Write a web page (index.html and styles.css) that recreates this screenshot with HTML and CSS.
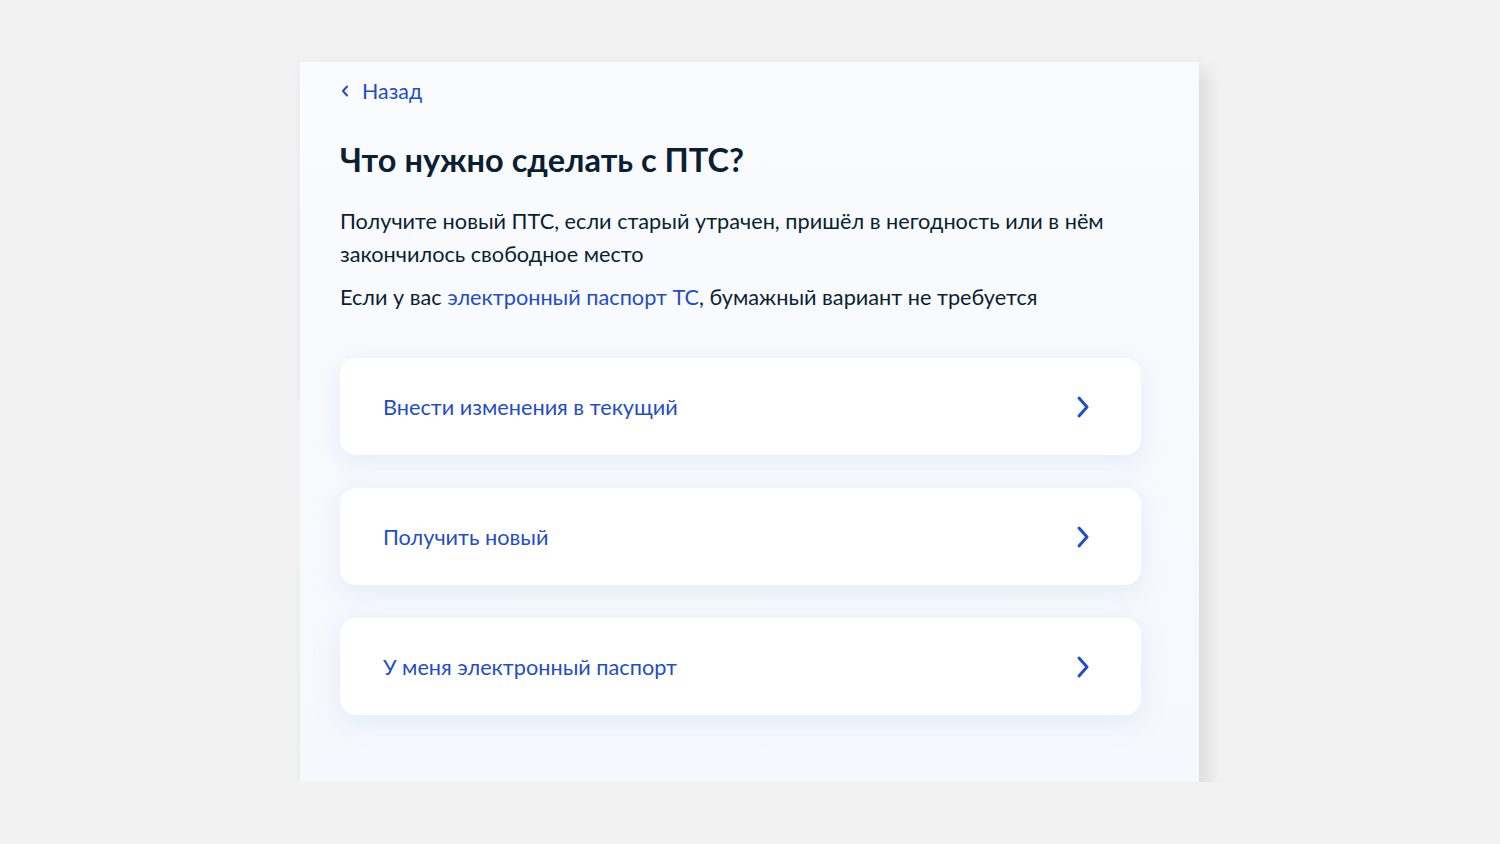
FILE: index.html
```html
<!DOCTYPE html>
<html lang="ru">
  <head>
    <meta charset="UTF-8">
    <meta name="viewport" content="width=device-width, initial-scale=1.0">
    <title>Что нужно сделать с ПТС?</title>
    <link rel="stylesheet" href="styles.css">
  </head>
  <body>
    <div class="panel">
      <a class="back-link" href="#">
        <svg class="back-icon" width="10" height="14" viewBox="0 0 10 14">
          <path d="M7 2.5 L3 7 L7 11.5" fill="none" stroke="currentColor" stroke-width="2" stroke-linecap="round" stroke-linejoin="round"/>
        </svg>
        Назад
      </a>
      <h1>Что нужно сделать с ПТС?</h1>
      <p>Получите новый ПТС, если старый утрачен, пришёл в негодность или в нём закончилось свободное место</p>
      <p>Если у вас <a href="#">электронный паспорт ТС</a>, бумажный вариант не требуется</p>

      <div class="options">
        <a class="option" href="#">
          <span>Внести изменения в текущий</span>
          <svg class="chevron" width="14" height="24" viewBox="0 0 14 24">
            <path d="M3 3 L11 12 L3 21" fill="none" stroke="currentColor" stroke-width="3" stroke-linecap="round" stroke-linejoin="round"/>
          </svg>
        </a>
        <a class="option" href="#">
          <span>Получить новый</span>
          <svg class="chevron" width="14" height="24" viewBox="0 0 14 24">
            <path d="M3 3 L11 12 L3 21" fill="none" stroke="currentColor" stroke-width="3" stroke-linecap="round" stroke-linejoin="round"/>
          </svg>
        </a>
        <a class="option" href="#">
          <span>У меня электронный паспорт</span>
          <svg class="chevron" width="14" height="24" viewBox="0 0 14 24">
            <path d="M3 3 L11 12 L3 21" fill="none" stroke="currentColor" stroke-width="3" stroke-linecap="round" stroke-linejoin="round"/>
          </svg>
        </a>
      </div>
    </div>
  </body>
</html>
```

FILE: styles.css
```css
body {
    font-family: Lato, "Noto Sans", sans-serif;
    margin: 0;
    background: #f2f2f2;
    color: #0b1f33;
}
.panel {
    width: 801px;
    margin: 62px 0 0 300px;
    padding: 16px 58px 67px 40px;
    background: linear-gradient(#fafbfe, #f5f8fd);
    box-shadow: 8px 10px 18px rgba(0,0,0,0.1);
}
a {
    color: #1f4dcb;
    text-decoration: none;
}
.back-link {
    display: inline-flex;
    align-items: center;
    gap: 12px;
    font-size: 21.4px;
    line-height: 26px;
}
h1 {
    font-size: 32.5px;
    font-weight: 700;
    line-height: 38px;
    margin: 37px 0 26px;
}
p {
    font-size: 21.7px;
    line-height: 33px;
    margin: 0 0 10px;
}
.options {
    display: flex;
    flex-direction: column;
    gap: 33px;
    margin-top: 44px;
}
.option {
    display: flex;
    align-items: center;
    justify-content: space-between;
    height: 97px;
    padding: 0 51px 0 43px;
    background: #fff;
    border-radius: 16px;
    box-shadow: 0 6px 24px rgba(176,196,230,0.25);
    font-size: 21.7px;
}
```
